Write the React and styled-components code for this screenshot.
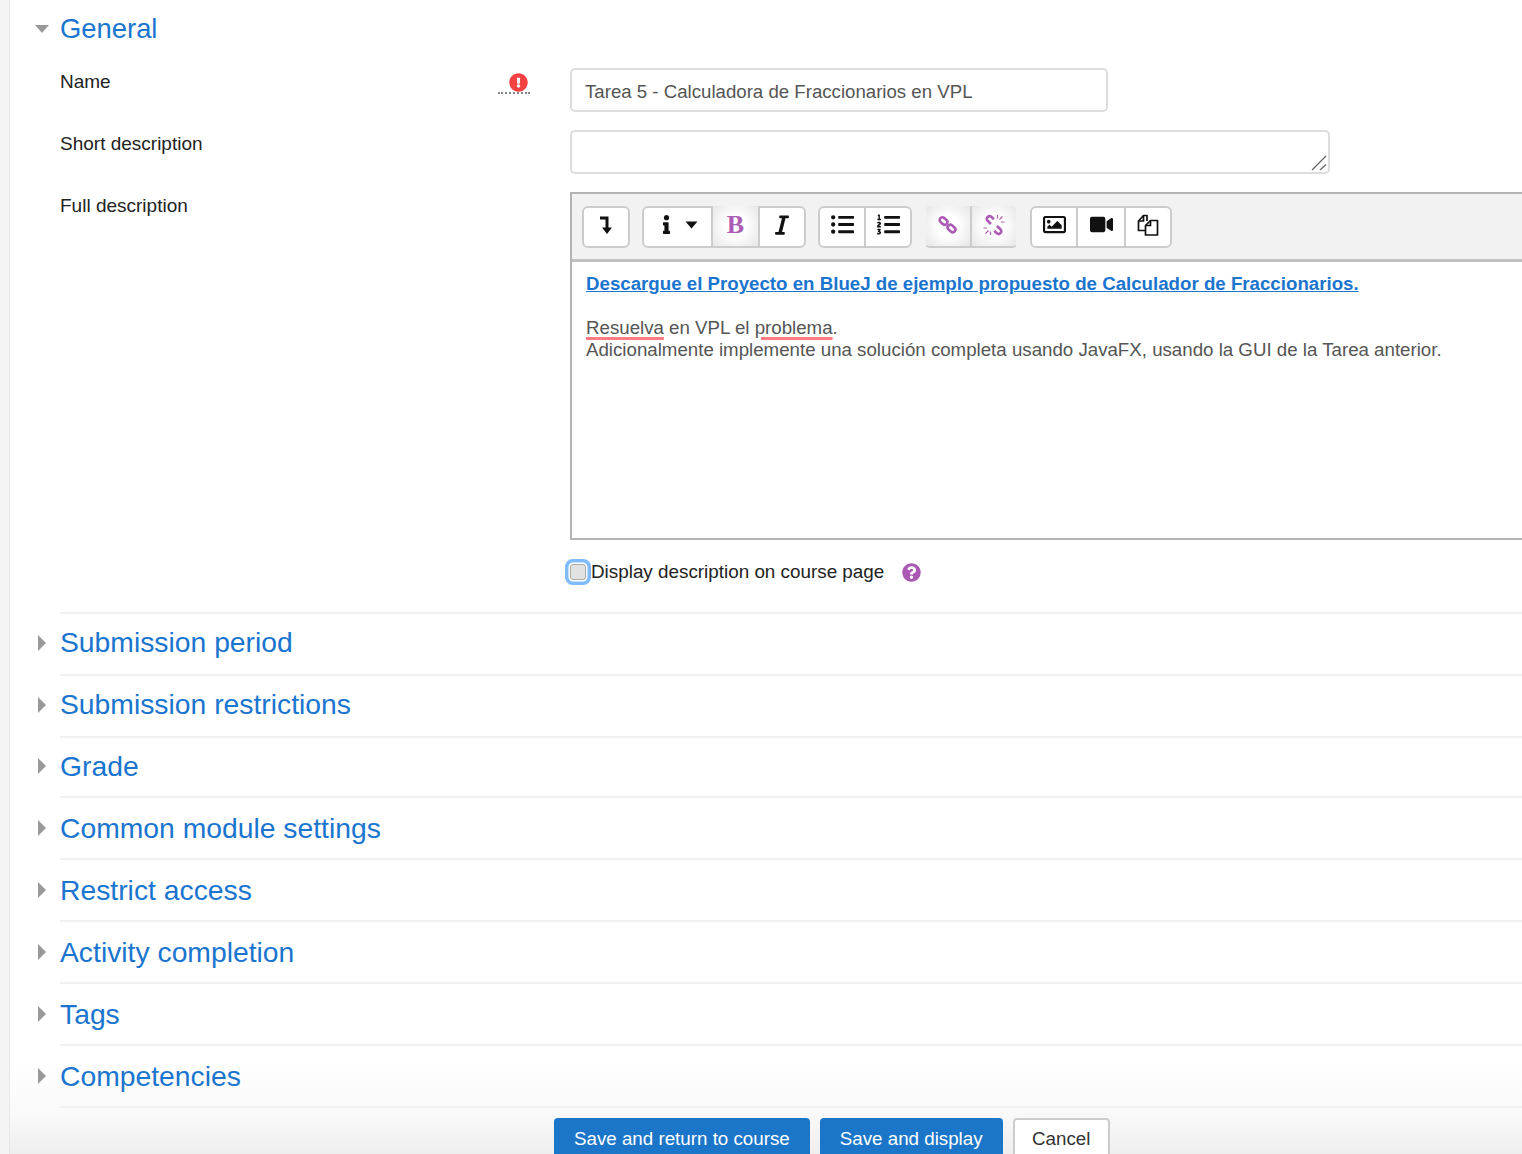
import React from 'react';
import styled, { createGlobalStyle } from 'styled-components';
import { FaInfo, FaItalic, FaListUl, FaListOl, FaRegImage, FaVideo, FaQuestionCircle, FaExclamationCircle } from 'react-icons/fa';

const GlobalStyle = createGlobalStyle`
  html, body {
    margin: 0;
    height: 100%;
    overflow: hidden;
    background: #f4f4f4;
  }
  body {
    font-family: "Liberation Sans", Arial, sans-serif;
    font-size: 19px;
    color: #222;
  }
`;

const Panel = styled.main`
  margin-left: 9px;
  height: 1154px;
  overflow: hidden;
  border-left: 1px solid #e8e8e8;
  background: linear-gradient(to bottom, #fff 0, #fff 1060px, #fafafa 1110px, #eee 1154px);
`;

const Section = styled.section`
  display: flex;
  align-items: stretch;
`;

const Gutter = styled.div`
  flex: 0 0 50px;
  display: flex;
  align-items: ${(p) => (p.$open ? 'flex-start' : 'center')};
  padding-left: ${(p) => (p.$open ? '25px' : '28px')};
  padding-top: ${(p) => (p.$open ? '25px' : p.$low ? '2px' : '0')};
  box-sizing: border-box;
`;

const Caret = styled.span`
  width: 0;
  height: 0;
  border-style: solid;
  border-color: transparent;
  ${(p) =>
    p.$open
      ? 'border-width: 8px 7.5px 0 7.5px; border-top-color: #999;'
      : 'border-width: 8px 0 8px 8px; border-left-color: #999;'}
`;

const SectionBody = styled.div`
  flex: 1;
  box-sizing: border-box;
  height: ${(p) => p.$height || 62}px;
  padding-top: ${(p) => p.$top || 12}px;
  border-top: ${(p) => (p.$first ? 'none' : '2px solid #f1f1f1')};
`;

const Heading = styled.h3`
  margin: 0;
  font-size: ${(p) => p.$size || 28.3}px;
  line-height: 32px;
  font-weight: 400;
  color: #1a75cf;
`;

const Form = styled.div`
  padding-left: 50px;
  display: flex;
  flex-direction: column;
  gap: 18px;
`;

const Row = styled.div`
  display: grid;
  grid-template-columns: 470px 1fr;
  column-gap: 40px;
`;

const Label = styled.div`
  display: flex;
  justify-content: space-between;
  align-items: flex-start;
  line-height: 28px;
`;

const Required = styled.span`
  width: 32px;
  height: 26px;
  box-sizing: border-box;
  padding: 5px 2px 0 0;
  border-bottom: 2px dotted #888;
  display: flex;
  justify-content: flex-end;
  color: #f44141;
  font-size: 19px;
`;

const TextInput = styled.input`
  display: block;
  width: 538px;
  height: 44px;
  box-sizing: border-box;
  padding: 3px 13px 0;
  border: 2px solid #ddd;
  border-radius: 5px;
  outline: none;
  font: inherit;
  font-size: 18.65px;
  color: #555;
`;

const AreaWrap = styled.div`
  position: relative;
  width: 760px;
  height: 44px;
`;

const TextArea = styled.textarea`
  display: block;
  width: 100%;
  height: 100%;
  box-sizing: border-box;
  padding: 8px 13px;
  border: 2px solid #ddd;
  border-radius: 5px;
  outline: none;
  resize: none;
  font: inherit;
  color: #555;
`;

const Grip = styled.svg`
  position: absolute;
  right: 2px;
  bottom: 2px;
  width: 18px;
  height: 18px;
`;

const Editor = styled.div`
  width: 1000px;
  height: 348px;
  box-sizing: border-box;
  border: 2px solid #b4b4b4;
  background: #fff;
`;

const Toolbar = styled.div`
  height: 68px;
  box-sizing: border-box;
  padding: 12px 10px 0;
  display: flex;
  gap: 12px;
  background: #f2f2f2;
  border-bottom: 3px solid #c0c0c0;
`;

const ToolGroup = styled.div`
  display: flex;
  height: 42px;
  box-sizing: border-box;
  border: 2px solid #ccc;
  border-top-color: ${(p) => (p.$flat ? 'transparent' : '#ccc')};
  border-left-color: ${(p) => (p.$flat ? 'transparent' : '#ccc')};
  border-right-color: ${(p) => (p.$flat ? 'transparent' : '#ccc')};
  border-radius: 6px;
  background: ${(p) => (p.$flat ? '#f2f2f2' : '#fff')};
`;

const Tool = styled.button`
  width: ${(p) => p.$w || 46}px;
  height: ${(p) => (p.$active ? 40 : 38)}px;
  margin-top: ${(p) => (p.$active ? -2 : 0)}px;
  padding: 0 0 ${(p) => (p.$active ? 3 : 5)}px;
  border: none;
  border-left: 2px solid #ccc;
  display: flex;
  align-items: center;
  justify-content: center;
  gap: 9px;
  color: #111;
  background: ${(p) => (p.$active ? 'radial-gradient(circle, #fff 35%, #e6e6e6 100%)' : 'transparent')};
  &:first-child {
    border-left: none;
    border-radius: 4px 0 0 4px;
  }
  &:last-child {
    border-radius: 0 4px 4px 0;
  }
`;

const BoldGlyph = styled.span`
  font: 700 26px "Liberation Serif", serif;
  color: #ac5cb4;
`;

const Content = styled.div`
  padding: 11px 14px;
  font-size: 18.7px;
  line-height: 22px;
  color: #555;
`;

const DocLink = styled.a`
  display: block;
  margin-bottom: 22px;
  font-weight: 700;
  color: #1a75cf;
  text-decoration: underline;
`;

const Misspelled = styled.span`
  text-decoration: underline #ff7d80 3px;
  text-underline-offset: 3px;
`;

const CheckRow = styled.div`
  display: flex;
  align-items: center;
  height: 28px;
  margin: 0 0 26px 500px;
  font-size: 18.85px;
`;

const CheckBox = styled.input`
  appearance: none;
  flex: none;
  width: 16px;
  height: 16px;
  margin: 0 5px 0 10px;
  box-sizing: border-box;
  border: 1px solid #aaa;
  border-radius: 3px;
  background: #e2e2e2;
  box-shadow: 0 0 0 1.5px #fff, 0 0 0 5px #80bcfb;
`;

const HelpIcon = styled.span`
  display: flex;
  margin-left: 18px;
  color: #a959b3;
  font-size: 19px;
`;

const Buttons = styled.div`
  display: flex;
  gap: 10px;
  margin: 9px 0 0 544px;
`;

const Button = styled.button`
  height: 42px;
  padding: ${(p) => (p.$secondary ? '0 17.5px 2px' : '0 20px')};
  border: ${(p) => (p.$secondary ? '2px solid #ccc' : 'none')};
  border-radius: 4px;
  font: inherit;
  font-size: 18.75px;
  line-height: 38px;
  background: ${(p) => (p.$secondary ? '#fff' : '#1b75c9')};
  color: ${(p) => (p.$secondary ? '#333' : '#fff')};
`;

const CollapseIcon = () => (
  <svg width="20" height="22" viewBox="0 0 20 22">
    <path d="M4 2.500h8.500v11H16l-5 6.500-5-6.500h3.500V5.500H4z" fill="#111" />
  </svg>
);

const DropCaret = () => (
  <svg width="13" height="8" viewBox="0 0 13 8">
    <path d="M0.500 0.500h12L6.500 7.500z" fill="#111" />
  </svg>
);

const LinkIcon = () => (
  <svg width="24" height="24" viewBox="0 0 24 24" fill="none" stroke="#ab5bb3" strokeWidth="2.600">
    <rect x="3.250" y="5.250" width="8.500" height="5.500" rx="2.750" transform="rotate(42 7.500 8)" />
    <rect x="11.250" y="12.750" width="8.500" height="5.500" rx="2.750" transform="rotate(42 15.500 15.500)" />
  </svg>
);

const UnlinkIcon = () => (
  <svg width="24" height="24" viewBox="0 0 24 24" fill="none" stroke="#ab5bb3">
    <path d="M9 11 5.500 7.600a2.700 2.700 0 0 1 3.800-3.800l2.600 2.500M15 13l3.600 3.500a2.700 2.700 0 0 1-3.800 3.800l-2.600-2.500" strokeWidth="2.600" />
    <path d="M15.500 2v3.500M17.500 6.500l3-3M19 9h3.500M8.500 22v-3.500M6.500 17.500l-3 3M5 15H1.500" strokeWidth="1.200" />
  </svg>
);

const FilesIcon = () => (
  <svg width="24" height="24" viewBox="0 0 24 24" fill="none" stroke="#111" strokeWidth="1.700" strokeLinejoin="round">
    <path d="M11 8V2.500H7.500L2.500 8v9.500H9" />
    <path d="M7.500 2.500V8h-5" />
    <path d="M14.500 7.500H21.500V22H9.500V12.500z" fill="#fff" />
    <path d="M14.500 7.500v5h-5" />
  </svg>
);

const sections = [
  { title: 'Submission period', height: 62 },
  { title: 'Submission restrictions', height: 62 },
  { title: 'Grade', height: 60 },
  { title: 'Common module settings', height: 62, top: 14, low: true },
  { title: 'Restrict access', height: 62, top: 14, low: true },
  { title: 'Activity completion', height: 62, top: 14, low: true },
  { title: 'Tags', height: 62, top: 14, low: true },
  { title: 'Competencies', height: 62, top: 14, low: true },
];

const App = () => (
  <>
    <GlobalStyle />
    <Panel>
      <Section>
        <Gutter $open>
          <Caret $open />
        </Gutter>
        <SectionBody $first $height={68} $top={13}>
          <Heading $size={27.4}>General</Heading>
        </SectionBody>
      </Section>
      <Form>
        <Row>
          <Label>
            Name
            <Required>
              <FaExclamationCircle />
            </Required>
          </Label>
          <TextInput defaultValue="Tarea 5 - Calculadora de Fraccionarios en VPL" />
        </Row>
        <Row>
          <Label>Short description</Label>
          <AreaWrap>
            <TextArea />
            <Grip viewBox="0 0 18 18" fill="none" stroke="#666" strokeWidth="1.300">
              <path d="M2 16 16 2M10 16l6-5.500" />
            </Grip>
          </AreaWrap>
        </Row>
        <Row>
          <Label>Full description</Label>
          <Editor>
            <Toolbar>
              <ToolGroup>
                <Tool $w={44}><CollapseIcon /></Tool>
              </ToolGroup>
              <ToolGroup>
                <Tool $w={67}><FaInfo size={19} /><DropCaret /></Tool>
                <Tool $active $w={47}><BoldGlyph>B</BoldGlyph></Tool>
                <Tool><FaItalic size={22} /></Tool>
              </ToolGroup>
              <ToolGroup>
                <Tool $w={44}><FaListUl size={23} /></Tool>
                <Tool><FaListOl size={23} /></Tool>
              </ToolGroup>
              <ToolGroup $flat>
                <Tool $active $w={44}><LinkIcon /></Tool>
                <Tool $active><UnlinkIcon /></Tool>
              </ToolGroup>
              <ToolGroup>
                <Tool $w={44}><FaRegImage size={23} /></Tool>
                <Tool $w={48}><FaVideo size={23} /></Tool>
                <Tool><FilesIcon /></Tool>
              </ToolGroup>
            </Toolbar>
            <Content>
              <DocLink href="#">Descargue el Proyecto en BlueJ de ejemplo propuesto de Calculador de Fraccionarios.</DocLink>
              <Misspelled>Resuelva</Misspelled> en VPL el <Misspelled>problema</Misspelled>.
              <br />
              Adicionalmente implemente una solución completa usando JavaFX, usando la GUI de la Tarea anterior.
            </Content>
          </Editor>
        </Row>
        <CheckRow>
          <CheckBox type="checkbox" />
          Display description on course page
          <HelpIcon>
            <FaQuestionCircle />
          </HelpIcon>
        </CheckRow>
      </Form>
      {sections.map((s) => (
        <Section key={s.title}>
          <Gutter $low={s.low}>
            <Caret />
          </Gutter>
          <SectionBody $height={s.height} $top={s.top}>
            <Heading>{s.title}</Heading>
          </SectionBody>
        </Section>
      ))}
      <Section>
        <Gutter />
        <SectionBody $height={2} $top={1} />
      </Section>
      <Buttons>
        <Button>Save and return to course</Button>
        <Button>Save and display</Button>
        <Button $secondary>Cancel</Button>
      </Buttons>
    </Panel>
  </>
);

export default App;
